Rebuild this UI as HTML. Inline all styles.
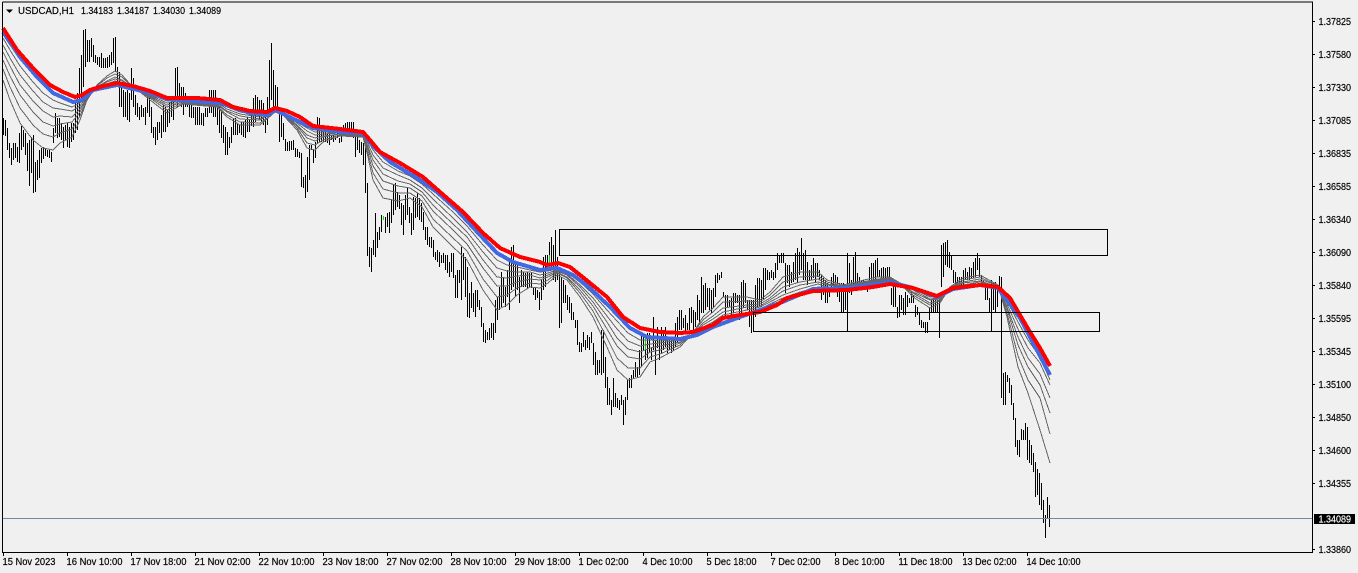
<!DOCTYPE html>
<html><head><meta charset="utf-8"><title>USDCAD,H1</title>
<style>
html,body{margin:0;padding:0;background:#f0f0f0;overflow:hidden}
svg{display:block}
text{font-family:"Liberation Sans",sans-serif;font-size:10px;fill:#000;stroke:#000;stroke-width:.18}
</style></head><body>
<svg xmlns="http://www.w3.org/2000/svg" width="1358" height="573" viewBox="0 0 1358 573">
<rect width="1358" height="573" fill="#f0f0f0"/>
<path transform="translate(.5,0)" shape-rendering="crispEdges" fill="none" stroke="#000" d="M3 118V135M5 120V136M7 128V150M9 143V158M11 148V165M13 143V160M15 143V158M17 147V162M19 133V163M21 126V150M23 130V147M25 133V155M27 143V171M29 140V186M31 137V173M33 135V193M35 162V192M37 160V180M39 150V178M41 148V163M43 147V159M45 148V156M47 150V157M49 150V158M51 152V162M53 128V143M55 113V133M57 118V138M59 118V137M61 123V140M63 127V148M65 125V140M67 123V147M69 127V148M71 123V142M73 123V140M75 100V133M77 93V130M79 68V117M81 55V100M83 30V87M85 29V67M87 40V62M89 40V62M91 38V57M93 45V62M95 55V63M97 57V65M99 57V67M101 53V68M103 58V68M105 58V68M107 57V68M109 55V67M111 52V65M113 38V63M115 37V72M117 67V83M119 72V107M121 83V107M123 90V117M125 92V117M127 90V120M129 93V122M131 68V100M133 78V107M135 95V115M137 103V117M139 107V120M141 105V117M143 108V117M145 107V125M147 90V113M149 98V117M151 107V133M153 127V138M155 127V145M157 122V140M159 122V133M161 115V138M163 105V132M165 107V132M167 110V127M169 103V123M171 98V117M173 100V120M175 68V100M177 67V107M179 83V100M181 87V107M183 87V115M185 93V107M187 97V107M189 103V117M191 103V118M193 107V118M195 107V125M197 107V125M199 107V125M201 113V125M203 113V126M205 108V117M207 108V117M209 90V113M211 90V113M213 90V117M215 90V117M217 100V125M219 107V133M221 110V138M223 125V143M225 127V155M227 132V155M229 137V148M231 127V143M233 118V135M235 118V135M237 123V135M239 125V133M241 122V135M243 122V137M245 120V138M247 117V132M249 120V132M251 113V126M253 98V127M255 95V122M257 97V117M259 100V120M261 100V122M263 103V125M265 113V133M267 97V125M269 60V110M271 43V100M273 70V113M275 85V107M277 87V110M279 113V142M281 115V137M283 123V140M285 139V151M287 142V151M289 141V151M291 141V150M293 140V150M295 148V157M297 149V157M299 152V158M301 153V187M303 177V188M305 175V198M307 157V192M309 145V180M311 145V150M313 150V163M315 142V158M317 117V143M319 118V142M321 130V142M323 130V142M325 132V142M327 133V143M329 133V145M331 135V140M333 135V142M335 137V140M337 133V138M339 138V143M341 133V142M343 125V135M345 123V135M347 122V130M349 122V130M351 122V130M353 122V138M355 132V157M357 135V150M359 140V153M361 142V155M363 143V165M365 133V193M367 183V256M369 247V267M371 248V272M373 240V255M375 213V257M377 232V248M379 227V240M381 215V232M383 216V220M385 217V233M387 213V227M389 212V233M391 200V223M393 185V215M395 183V210M397 192V207M399 195V209M401 203V225M403 205V235M405 195V220M407 187V215M409 207V223M411 213V235M413 197V230M415 198V218M417 193V217M419 198V220M421 203V222M423 212V230M425 227V240M427 227V245M429 237V247M431 237V248M433 240V257M435 252V260M437 250V262M439 252V267M441 255V263M443 253V263M445 255V270M447 255V273M449 262V277M451 253V272M453 253V278M455 275V298M457 270V298M459 270V283M461 247V300M463 253V280M465 257V297M467 267V317M469 293V318M471 282V308M473 293V312M475 290V317M477 290V307M479 300V310M481 307V327M483 323V342M485 330V343M487 332V340M489 328V340M491 323V338M493 323V340M495 300V333M497 297V320M499 287V310M501 272V307M503 277V303M505 287V307M507 270V297M509 262V310M511 247V290M513 245V287M515 263V297M517 263V290M519 277V303M521 270V287M523 272V287M525 273V287M527 272V288M529 273V287M531 272V288M533 287V295M535 288V300M537 290V298M539 292V310M541 280V300M543 257V290M545 255V287M547 255V270M549 242V270M551 237V267M553 245V280M555 230V282M557 257V280M559 270V328M561 277V323M563 280V303M565 285V303M567 295V310M569 297V313M571 303V320M573 312V320M575 320V328M577 320V345M579 342V352M581 343V352M583 332V347M585 340V350M587 335V348M589 337V350M591 332V343M593 343V365M595 352V375M597 360V375M599 360V373M601 330V375M603 330V373M605 357V388M607 377V405M609 388V405M611 400V415M613 378V407M615 393V407M617 398V408M619 400V410M621 395V405M623 400V425M625 397V415M627 380V400M629 378V388M631 375V388M633 370V378M635 362V377M637 367V377M639 350V375M641 335V367M643 333V350M645 340V360M647 333V358M649 333V353M651 347V360M653 317V350M655 340V375M657 327V348M659 337V360M661 327V353M663 330V350M665 327V347M667 337V353M669 340V350M671 338V353M673 340V350M675 323V347M677 317V343M679 310V330M681 310V330M683 318V328M685 315V333M687 323V330M689 308V330M691 307V323M693 310V333M695 312V327M697 295V320M699 300V325M701 277V313M703 285V313M705 283V310M707 288V307M709 288V310M711 290V313M713 288V307M715 275V297M717 273V283M719 275V280M721 272V278M723 292V297M725 295V317M727 295V308M729 300V307M731 298V317M733 293V313M735 293V303M737 295V303M739 295V320M741 282V313M743 280V308M745 283V303M747 300V310M749 300V327M751 300V333M753 300V325M755 285V317M757 278V307M759 278V307M761 280V307M763 268V300M765 268V290M767 270V280M769 272V280M771 270V278M773 272V280M775 263V278M777 253V270M779 255V263M781 253V263M783 253V263M785 263V293M787 265V283M789 265V287M791 272V283M793 262V282M795 253V280M797 248V283M799 252V275M801 238V270M803 253V280M805 250V280M807 262V285M809 270V280M811 265V280M813 258V278M815 263V282M817 263V277M819 270V280M821 275V300M823 278V295M825 280V303M827 283V303M829 288V297M831 277V290M833 273V292M835 275V292M837 277V297M839 283V302M841 283V312M843 283V312M845 292V310M847 253V332M849 263V293M851 280V295M853 257V287M855 252V290M857 273V287M859 277V287M861 280V290M863 280V290M865 282V287M867 283V292M869 267V287M871 263V285M873 263V280M875 260V283M877 258V277M879 270V277M881 268V282M883 267V285M885 268V285M887 267V282M889 267V282M891 288V305M893 283V307M895 287V307M897 307V318M899 295V317M901 295V310M903 298V315M905 292V315M907 295V307M909 298V303M911 292V303M913 295V303M915 305V317M917 307V315M919 313V325M921 320V328M923 322V328M925 322V333M927 322V333M929 308V320M931 300V313M933 300V313M935 300V313M937 300V313M939 293V338M941 245V287M943 243V277M945 242V265M947 240V267M949 252V268M951 255V270M953 270V283M955 272V285M957 277V285M959 277V285M961 277V285M963 270V287M965 268V280M967 272V280M969 267V280M971 268V278M973 262V278M975 258V277M977 253V270M979 258V277M981 275V283M983 280V285M985 285V300M987 285V300M989 298V312M991 280V332M993 283V310M995 282V312M997 287V307M999 276V293M1001 277V398M1003 373V405M1005 372V405M1007 375V382M1009 378V393M1011 385V405M1013 403V420M1015 418V447M1017 440V455M1019 440V457M1021 429V440M1023 430V440M1025 423V440M1027 427V460M1029 440V463M1031 445V465M1033 453V472M1035 462V497M1037 469V495M1039 473V505M1041 483V510M1043 500V523M1045 515V538M1047 497V518M1049 505V527"/>
<path transform="translate(.5,0)" shape-rendering="crispEdges" fill="none" stroke="#00e000" d="M383 216V220M549 255V267M645 337V350"/>
<g fill="none" stroke="#666" stroke-width="1" shape-rendering="crispEdges">
<polyline points="3,38 10,50 20,66 33,82 43,93 53,100 60,103 72,107 80,103 87,96 97,88 107,86 115,83 122,85 130,87 140,90 150,94 167,101 183,100 217,103 227,107 240,112 260,115 275,110 283,112 297,122 307,128 315,132 323,132 340,133 363,134 368,141 373,150 383,162 398,171 410,176 422,184 433,194 453,212 467,226 483,245 497,260 507,265 517,267 530,270 540,272 548,271 557,269 567,273 580,282 593,294 607,310 617,321 628,333 640,340 650,340 660,341 680,339 693,335 703,329 713,325 723,319 747,313 760,309 770,304 783,298 800,292 818,287 827,288 843,288 877,283 890,281 900,284 913,289 930,297 940,297 950,290 963,286 980,284 998,288 1007,301 1018,322 1028,340 1040,357 1050,380"/>
<polyline points="3,45 10,58 20,75 33,91 43,102 53,108 60,109 72,111 80,106 87,96 97,88 107,84 115,81 122,83 130,87 140,91 150,95 167,103 183,100 217,103 227,109 240,114 260,117 275,111 283,113 297,123 307,131 315,135 323,134 340,133 363,134 368,144 373,155 383,168 398,175 410,180 422,188 433,199 453,218 467,232 483,252 497,268 507,271 517,272 530,272 540,275 548,273 557,270 567,274 580,285 593,298 607,316 617,329 628,341 640,346 650,344 660,343 680,340 693,334 703,327 713,322 723,315 747,310 760,307 770,302 783,295 800,289 818,284 827,287 843,287 877,282 890,281 900,284 913,290 930,299 940,298 950,289 963,285 980,282 998,287 1007,304 1018,329 1028,348 1040,363 1050,385"/>
<polyline points="3,52 10,66 20,85 33,101 43,111 53,117 60,116 72,117 80,109 87,97 97,87 107,82 115,79 122,81 130,86 140,91 150,96 167,105 183,101 217,104 227,111 240,116 260,119 275,111 283,113 297,125 307,135 315,138 323,136 340,134 363,135 368,147 373,160 383,174 398,181 410,184 422,192 433,205 453,224 467,237 483,260 497,277 507,278 517,276 530,275 540,278 548,275 557,271 567,275 580,287 593,302 607,322 617,338 628,349 640,352 650,348 660,346 680,342 693,334 703,325 713,319 723,312 747,307 760,306 770,300 783,291 800,285 818,282 827,285 843,287 877,281 890,280 900,284 913,292 930,300 940,299 950,289 963,283 980,281 998,287 1007,307 1018,337 1028,358 1040,374 1050,398"/>
<polyline points="3,60 10,76 20,95 33,112 43,122 53,126 60,124 72,122 80,112 87,98 97,87 107,81 115,77 122,80 130,86 140,91 150,97 167,107 183,102 217,105 227,112 240,119 260,120 275,111 283,114 297,126 307,138 315,141 323,137 340,134 363,135 368,149 373,166 383,181 398,186 410,188 422,196 433,211 453,230 467,244 483,268 497,286 507,286 517,282 530,279 540,280 548,277 557,272 567,277 580,290 593,306 607,329 617,346 628,357 640,359 650,352 660,350 680,343 693,334 703,323 713,316 723,308 747,305 760,304 770,298 783,287 800,282 818,279 827,284 843,286 877,280 890,279 900,283 913,293 930,303 940,300 950,288 963,282 980,279 998,286 1007,309 1018,345 1028,367 1040,385 1050,413"/>
<polyline points="3,69 10,87 20,108 33,125 43,134 53,137 60,133 72,129 80,116 87,99 97,86 107,78 115,74 122,77 130,85 140,92 150,98 167,110 183,103 217,106 227,115 240,122 260,123 275,112 283,114 297,128 307,143 315,145 323,140 340,135 363,136 368,153 373,173 383,189 398,193 410,193 422,201 433,219 453,238 467,251 483,279 497,297 507,295 517,288 530,283 540,284 548,280 557,273 567,278 580,293 593,311 607,338 617,358 628,368 640,368 650,357 660,354 680,345 693,333 703,320 713,312 723,302 747,301 760,302 770,295 783,282 800,277 818,276 827,282 843,286 877,279 890,278 900,283 913,295 930,305 940,301 950,288 963,280 980,277 998,286 1007,313 1018,356 1028,380 1040,398 1050,434"/>
<polyline points="3,80 10,100 20,123 33,140 43,148 53,150 60,143 72,137 80,120 87,100 97,85 107,76 115,71 122,75 130,84 140,92 150,100 167,113 183,104 217,107 227,117 240,125 260,125 275,112 283,115 297,130 307,148 315,150 323,142 340,136 363,137 368,157 373,180 383,198 398,201 410,198 422,207 433,227 453,247 467,260 483,290 497,310 507,305 517,295 530,287 540,288 548,283 557,275 567,280 580,297 593,317 607,347 617,370 628,380 640,377 650,362 660,358 680,347 693,333 703,317 713,308 723,297 747,297 760,300 770,292 783,277 800,272 818,272 827,280 843,285 877,277 890,277 900,283 913,297 930,308 940,303 950,287 963,278 980,275 998,285 1007,317 1018,367 1028,393 1040,430 1050,463"/>
</g>
<polyline fill="none" stroke="#4169e1" stroke-width="4" stroke-linejoin="round" shape-rendering="crispEdges" points="3,32 20,57 37,77 53,93 73,102 82,100 93,90 117,85 150,93 167,99 220,103 250,113 267,115 275,110 300,122 313,128 340,132 363,133 372,145 390,162 417,178 437,192 457,210 480,235 497,253 513,262 540,270 557,268 573,275 590,288 610,307 630,328 647,337 680,339 697,335 713,327 740,317 780,303 813,289 847,288 890,282 913,288 937,297 953,289 980,285 998,288 1020,318 1050,375"/>
<polyline fill="none" stroke="#ff0000" stroke-width="4" stroke-linejoin="round" shape-rendering="crispEdges" points="3,28 17,50 33,68 50,85 63,92 75,97 82,95 90,90 103,86 117,83 133,86 150,91 167,98 197,98 220,100 233,107 250,111 267,112 275,108 287,111 300,117 313,126 340,129 363,132 370,140 380,152 400,163 423,177 440,192 463,212 483,233 500,248 520,257 540,262 547,265 558,263 570,267 590,283 607,297 623,317 640,328 660,332 680,333 693,332 713,325 723,318 740,315 760,312 777,305 787,298 813,291 847,290 873,287 890,284 913,288 937,296 953,288 980,285 998,287 1010,298 1020,315 1030,332 1040,348 1050,366"/>
<g shape-rendering="crispEdges" fill="none" stroke="#000">
<rect x="559.5" y="229.5" width="548" height="26"/>
<rect x="753.5" y="312.5" width="346" height="19"/>
</g>
<path shape-rendering="crispEdges" fill="none" stroke="#778899" d="M3 518.5H1312"/>
<path shape-rendering="crispEdges" fill="none" stroke="#000" d="M2.5 2V552.5H1312.5V2H2.5"/>
<path shape-rendering="crispEdges" fill="none" stroke="#000" d="M3.5 553v3M67.5 553v3M131.5 553v3M195.5 553v3M259.5 553v3M323.5 553v3M387.5 553v3M451.5 553v3M515.5 553v3M579.5 553v3M643.5 553v3M707.5 553v3M771.5 553v3M835.5 553v3M899.5 553v3M963.5 553v3M1027.5 553v3M1313 21.5h2M1313 54.5h2M1313 87.5h2M1313 120.5h2M1313 153.5h2M1313 186.5h2M1313 219.5h2M1313 252.5h2M1313 285.5h2M1313 318.5h2M1313 351.5h2M1313 384.5h2M1313 417.5h2M1313 450.5h2M1313 483.5h2M1313 549.5h2"/>
<path d="M6 9.5h7l-3.5 3.5z" fill="#000"/>
<text x="18" y="14" textLength="56" lengthAdjust="spacingAndGlyphs">USDCAD,H1</text>
<text x="81" y="14" textLength="32" lengthAdjust="spacingAndGlyphs">1.34183</text>
<text x="117" y="14" textLength="32" lengthAdjust="spacingAndGlyphs">1.34187</text>
<text x="153" y="14" textLength="32" lengthAdjust="spacingAndGlyphs">1.34030</text>
<text x="189" y="14" textLength="32" lengthAdjust="spacingAndGlyphs">1.34089</text>
<g>
<text x="1318.5" y="25" textLength="32.5" lengthAdjust="spacingAndGlyphs">1.37825</text>
<text x="1318.5" y="58" textLength="32.5" lengthAdjust="spacingAndGlyphs">1.37580</text>
<text x="1318.5" y="91" textLength="32.5" lengthAdjust="spacingAndGlyphs">1.37330</text>
<text x="1318.5" y="124" textLength="32.5" lengthAdjust="spacingAndGlyphs">1.37085</text>
<text x="1318.5" y="157" textLength="32.5" lengthAdjust="spacingAndGlyphs">1.36835</text>
<text x="1318.5" y="190" textLength="32.5" lengthAdjust="spacingAndGlyphs">1.36585</text>
<text x="1318.5" y="223" textLength="32.5" lengthAdjust="spacingAndGlyphs">1.36340</text>
<text x="1318.5" y="256" textLength="32.5" lengthAdjust="spacingAndGlyphs">1.36090</text>
<text x="1318.5" y="289" textLength="32.5" lengthAdjust="spacingAndGlyphs">1.35840</text>
<text x="1318.5" y="322" textLength="32.5" lengthAdjust="spacingAndGlyphs">1.35595</text>
<text x="1318.5" y="355" textLength="32.5" lengthAdjust="spacingAndGlyphs">1.35345</text>
<text x="1318.5" y="388" textLength="32.5" lengthAdjust="spacingAndGlyphs">1.35100</text>
<text x="1318.5" y="421" textLength="32.5" lengthAdjust="spacingAndGlyphs">1.34850</text>
<text x="1318.5" y="454" textLength="32.5" lengthAdjust="spacingAndGlyphs">1.34600</text>
<text x="1318.5" y="487" textLength="32.5" lengthAdjust="spacingAndGlyphs">1.34355</text>
<text x="1318.5" y="553" textLength="32.5" lengthAdjust="spacingAndGlyphs">1.33860</text>
</g>
<rect x="1314" y="514" width="41" height="10" fill="#000"/>
<text x="1318.5" y="522.5" textLength="32.5" lengthAdjust="spacingAndGlyphs" style="fill:#fff;stroke:#fff">1.34089</text>
<g>
<text x="2.5" y="565" textLength="53" lengthAdjust="spacingAndGlyphs">15 Nov 2023</text>
<text x="66.5" y="565" textLength="56" lengthAdjust="spacingAndGlyphs">16 Nov 10:00</text>
<text x="130.5" y="565" textLength="56" lengthAdjust="spacingAndGlyphs">17 Nov 18:00</text>
<text x="194.5" y="565" textLength="56" lengthAdjust="spacingAndGlyphs">21 Nov 02:00</text>
<text x="258.5" y="565" textLength="56" lengthAdjust="spacingAndGlyphs">22 Nov 10:00</text>
<text x="322.5" y="565" textLength="56" lengthAdjust="spacingAndGlyphs">23 Nov 18:00</text>
<text x="386.5" y="565" textLength="56" lengthAdjust="spacingAndGlyphs">27 Nov 02:00</text>
<text x="450.5" y="565" textLength="56" lengthAdjust="spacingAndGlyphs">28 Nov 10:00</text>
<text x="514.5" y="565" textLength="56" lengthAdjust="spacingAndGlyphs">29 Nov 18:00</text>
<text x="578.5" y="565" textLength="50" lengthAdjust="spacingAndGlyphs">1 Dec 02:00</text>
<text x="642.5" y="565" textLength="50" lengthAdjust="spacingAndGlyphs">4 Dec 10:00</text>
<text x="706.5" y="565" textLength="50" lengthAdjust="spacingAndGlyphs">5 Dec 18:00</text>
<text x="770.5" y="565" textLength="50" lengthAdjust="spacingAndGlyphs">7 Dec 02:00</text>
<text x="834.5" y="565" textLength="50" lengthAdjust="spacingAndGlyphs">8 Dec 10:00</text>
<text x="898.5" y="565" textLength="54" lengthAdjust="spacingAndGlyphs">11 Dec 18:00</text>
<text x="962.5" y="565" textLength="54" lengthAdjust="spacingAndGlyphs">13 Dec 02:00</text>
<text x="1026.5" y="565" textLength="54" lengthAdjust="spacingAndGlyphs">14 Dec 10:00</text>
</g>
</svg>
</body></html>
